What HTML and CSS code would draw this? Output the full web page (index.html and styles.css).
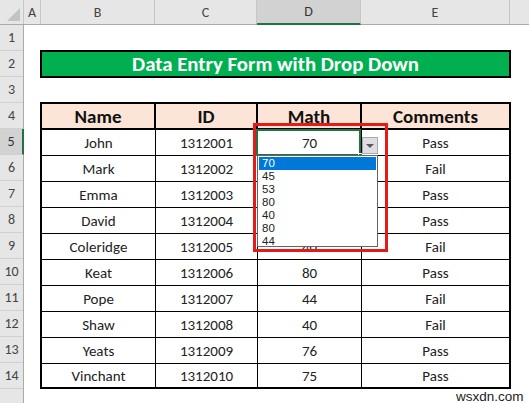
FILE: index.html
```html
<!DOCTYPE html>
<html>
<head>
<meta charset="utf-8">
<link rel="stylesheet" href="styles.css">
</head>
<body>
<div class="app">
  <div class="colheads">
    <div class="corner"><span class="tri"></span></div>
    <div class="ch w-a">A</div>
    <div class="ch w-b">B</div>
    <div class="ch w-c">C</div>
    <div class="ch w-d sel">D</div>
    <div class="ch w-e">E</div>
    <div class="ch w-f"></div>
  </div>
  <div class="main">
    <div class="rowheads">
      <div class="rh">1</div>
      <div class="rh">2</div>
      <div class="rh">3</div>
      <div class="rh">4</div>
      <div class="rh sel">5</div>
      <div class="rh">6</div>
      <div class="rh">7</div>
      <div class="rh">8</div>
      <div class="rh">9</div>
      <div class="rh">10</div>
      <div class="rh">11</div>
      <div class="rh">12</div>
      <div class="rh">13</div>
      <div class="rh">14</div>
      <div class="rh"></div>
    </div>
    <div class="cells">
      <div class="title">Data Entry Form with Drop Down</div>
      <div class="tbl">
        <div class="hdr">
          <div class="c">Name</div><div class="c">ID</div><div class="c">Math</div><div class="c">Comments</div>
        </div>
        <div class="row">
          <div class="c">John</div><div class="c">1312001</div>
          <div class="c active">70
            <span class="selbox"></span><span class="handle"></span>
            <span class="ddbtn"><span class="arrow"></span></span>
            <div class="list">
              <div class="item on">70</div>
              <div class="item">45</div>
              <div class="item">53</div>
              <div class="item">80</div>
              <div class="item">40</div>
              <div class="item">80</div>
              <div class="item">44</div>
            </div>
            <span class="redbox"></span>
          </div>
          <div class="c">Pass</div>
        </div>
        <div class="row"><div class="c">Mark</div><div class="c">1312002</div><div class="c">45</div><div class="c">Fail</div></div>
        <div class="row"><div class="c">Emma</div><div class="c">1312003</div><div class="c">53</div><div class="c">Pass</div></div>
        <div class="row"><div class="c">David</div><div class="c">1312004</div><div class="c">80</div><div class="c">Pass</div></div>
        <div class="row"><div class="c">Coleridge</div><div class="c">1312005</div><div class="c">40</div><div class="c">Fail</div></div>
        <div class="row"><div class="c">Keat</div><div class="c">1312006</div><div class="c">80</div><div class="c">Pass</div></div>
        <div class="row"><div class="c">Pope</div><div class="c">1312007</div><div class="c">44</div><div class="c">Fail</div></div>
        <div class="row"><div class="c">Shaw</div><div class="c">1312008</div><div class="c">40</div><div class="c">Fail</div></div>
        <div class="row"><div class="c">Yeats</div><div class="c">1312009</div><div class="c">76</div><div class="c">Pass</div></div>
        <div class="row last"><div class="c">Vinchant</div><div class="c">1312010</div><div class="c">75</div><div class="c">Pass</div></div>
      </div>
    </div>
    <div class="watermark">wsxdn.com</div>
  </div>
</div>
</body>
</html>
```
FILE: styles.css
```css
* { box-sizing: border-box; }
html, body { margin: 0; padding: 0; background: #fff; }
body { width: 529px; height: 403px; overflow: hidden; font-family: Carlito, Calibri, Lato, "Open Sans", sans-serif; }
.app { width: 529px; height: 403px; display: flex; flex-direction: column; }

.colheads { display: flex; height: 25px; flex: none; background: #e6e6e6; border-bottom: 1px solid #ababab; }
.corner { width: 24px; flex: none; position: relative; border-right: 1px solid #c6c6c6; }
.tri { position: absolute; right: 3px; bottom: 3px; width: 0; height: 0; border-left: 13px solid transparent; border-bottom: 13px solid #c3c3c3; }
.ch { flex: none; height: 24px; display: flex; align-items: center; justify-content: center; font-size: 14px; color: #444; border-right: 1px solid #c6c6c6; }
.w-a { width: 17px; }
.w-b { width: 114px; }
.w-c { width: 102px; }
.w-d { width: 104px; }
.w-e { width: 149px; }
.w-f { flex: 1; border-right: none; }
.ch.sel { background: #d2d2d2; border-bottom: 2px solid #217346; height: 25px; margin-bottom: -1px; color: #333; }

.main { flex: 1; display: flex; position: relative; }
.rowheads { width: 24px; flex: none; background: #e6e6e6; border-right: 1px solid #ababab; }
.rh { height: 26px; border-bottom: 1px solid #d0d0d0; display: flex; align-items: center; justify-content: center; font-size: 14px; color: #444; }
.rh.sel { background: #d2d2d2; border-right: 2px solid #217346; margin-right: -1px; color: #333; }

.cells { padding: 25px 0 0 16px; }
.title { width: 471px; height: 28px; background: #00b050; border: 2px solid #000; color: #fff; font-weight: bold; font-size: 20.8px; display: flex; align-items: center; justify-content: center; padding-bottom: 1px; }

.tbl { margin-top: 24px; width: 471px; border: 2px solid #000; background: #000; display: flex; flex-direction: column; gap: 1px; }
.hdr { display: grid; grid-template-columns: 112px 100px 102px 147px; column-gap: 2px; height: 24px; margin-bottom: 1px; }
.hdr .c { background: #fce4d6; font-weight: bold; font-size: 19px; color: #111; }
.row { display: grid; grid-template-columns: 113px 101px 103px 147px; column-gap: 1px; height: 25px; }
.row.last { height: 23px; }
.c { background: #fff; display: flex; align-items: center; justify-content: center; font-size: 15px; color: #222; }
.active { position: relative; }

.selbox { position: absolute; left: -2px; top: -1px; width: 105px; height: 27px; border: 2px solid #217346; }
.handle { position: absolute; left: 100px; top: 23px; width: 5px; height: 5px; background: #217346; border: 1px solid #fff; }
.ddbtn { position: absolute; left: 104px; top: 7px; width: 16px; height: 17px; background: #dedee2; border: 1px solid #a9a9b0; display: flex; align-items: center; justify-content: center; }
.arrow { width: 0; height: 0; border-left: 4px solid transparent; border-right: 4px solid transparent; border-top: 4px solid #5a5a5a; }
.list { position: absolute; left: -1px; top: 25px; width: 121px; height: 92px; background: #fff; border: 1px solid #646464; padding: 1px 1px 0 1px; z-index: 2; }
.item { height: 13px; line-height: 13px; font-family: "Liberation Sans", Arial, sans-serif; font-size: 11.5px; color: #222; padding-left: 3px; }
.item.on { background: #0078d7; color: #fff; }
.redbox { position: absolute; left: -5px; top: -7px; width: 135px; height: 129px; border: 3px solid #e41b1b; z-index: 3; }

.watermark { position: absolute; left: 455px; top: 365px; font-family: "Liberation Sans", Arial, sans-serif; font-size: 13.5px; color: #222; background: #fff; line-height: 13px; padding: 0 1px; }
```
